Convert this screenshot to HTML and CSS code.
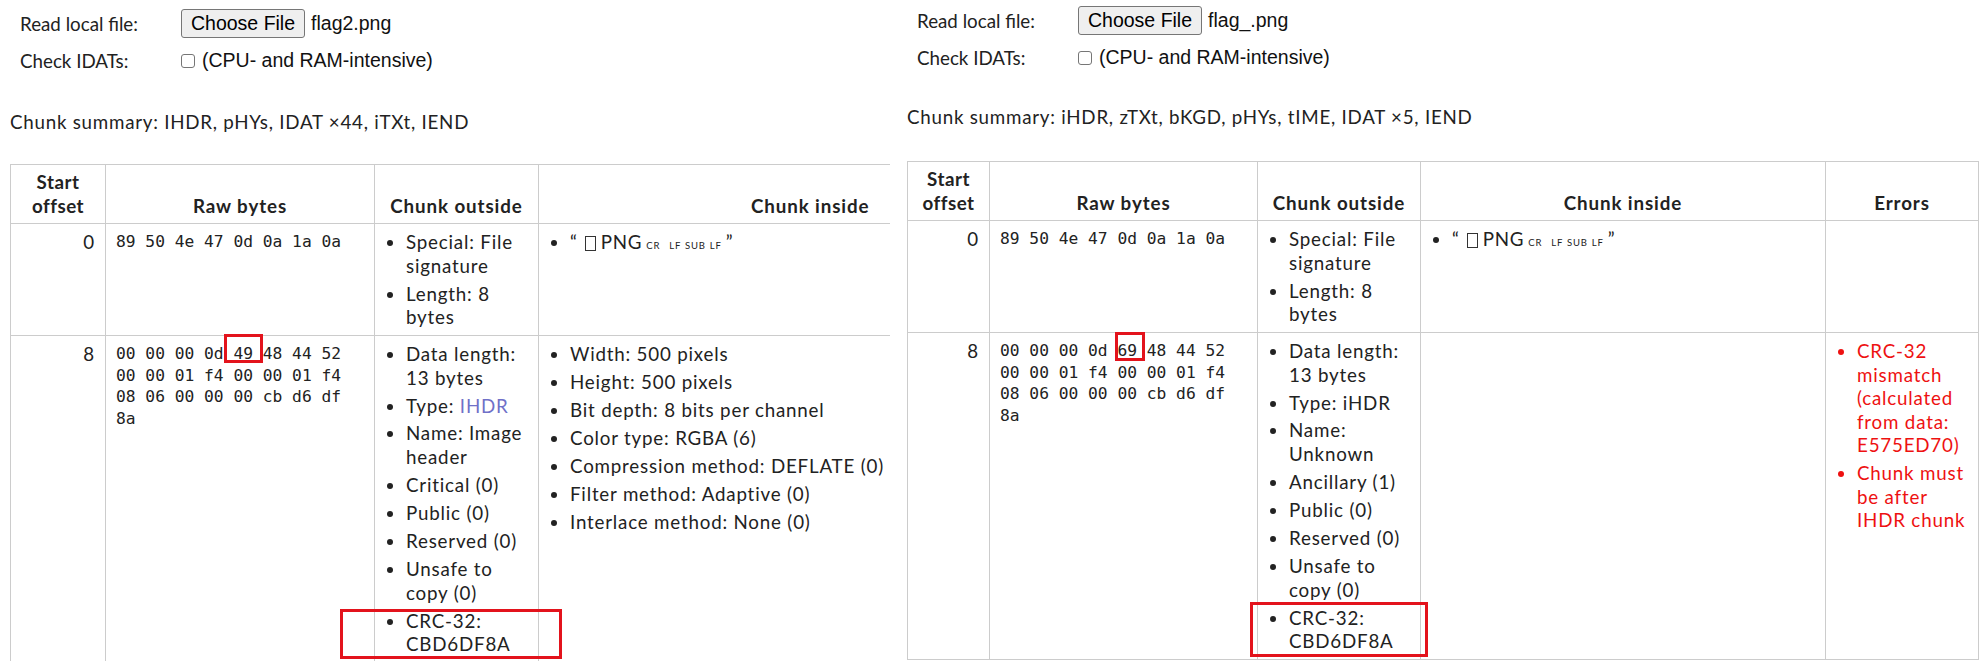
FILE: index.html
```html
<!DOCTYPE html>
<html lang="en">
<head>
<meta charset="utf-8">
<title>PNG file chunk inspector</title>
<link rel="stylesheet" href="styles.css">
</head>
<body>
<div class="shots">
  <section class="panel panel-left">
    <div class="form">
      <div class="form-label">Read local file:</div>
      <div class="form-ctl"><button class="file-btn" type="button">Choose File</button><span class="file-name">flag2.png</span></div>
      <div class="form-label">Check IDATs:</div>
      <div class="form-ctl"><span class="checkbox"></span><span class="ctl-text">(CPU- and RAM-intensive)</span></div>
    </div>
    <p class="summary">Chunk summary: IHDR, pHYs, IDAT ×44, iTXt, IEND</p>
    <table class="chunks chunks-left">
      <colgroup>
        <col class="c-off-l"><col class="c-raw-l"><col class="c-out-l"><col class="c-in-l">
      </colgroup>
      <thead>
        <tr><th class="th-off">Start offset</th><th>Raw bytes</th><th>Chunk outside</th><th class="th-cut">Chunk inside</th></tr>
      </thead>
      <tbody>
        <tr>
          <td class="off">0</td>
          <td class="raw"><span class="hex-line">89 50 4e 47 0d 0a 1a 0a</span></td>
          <td><ul class="items"><li>Special: File signature</li><li>Length: 8 bytes</li></ul></td>
          <td class="td-cut"><ul class="items"><li><span class="q1">“</span><span class="tofu"></span><span class="png">PNG</span><span class="ctrl ctrl-cr">CR</span><span class="ctrl">LF</span><span class="ctrl">SUB</span><span class="ctrl">LF</span><span class="q2">”</span></li></ul></td>
        </tr>
        <tr>
          <td class="off">8</td>
          <td class="raw"><span class="hex-line">00 00 00 0d 49 48 44 52</span><span class="hex-line">00 00 01 f4 00 00 01 f4</span><span class="hex-line">08 06 00 00 00 cb d6 df</span><span class="hex-line">8a</span></td>
          <td><ul class="items"><li>Data length: 13 bytes</li><li>Type: <span class="type-link">IHDR</span></li><li>Name: Image header</li><li>Critical (0)</li><li>Public (0)</li><li>Reserved (0)</li><li>Unsafe to copy (0)</li><li>CRC-32: CBD6DF8A</li></ul></td>
          <td class="td-cut"><ul class="items"><li>Width: 500 pixels</li><li>Height: 500 pixels</li><li>Bit depth: 8 bits per channel</li><li>Color type: RGBA (6)</li><li>Compression method: DEFLATE (0)</li><li>Filter method: Adaptive (0)</li><li>Interlace method: None (0)</li></ul></td>
        </tr>
      </tbody>
    </table>
    <div class="mark mark-l1"></div>
    <div class="mark mark-l2"></div>
  </section>

  <section class="panel panel-right">
    <div class="form">
      <div class="form-label">Read local file:</div>
      <div class="form-ctl"><button class="file-btn" type="button">Choose File</button><span class="file-name">flag_.png</span></div>
      <div class="form-label">Check IDATs:</div>
      <div class="form-ctl"><span class="checkbox"></span><span class="ctl-text">(CPU- and RAM-intensive)</span></div>
    </div>
    <p class="summary summary-right">Chunk summary: iHDR, zTXt, bKGD, pHYs, tIME, IDAT ×5, IEND</p>
    <table class="chunks chunks-right">
      <colgroup>
        <col class="c-off-r"><col class="c-raw-r"><col class="c-out-r"><col class="c-in-r"><col class="c-err-r">
      </colgroup>
      <thead>
        <tr><th class="th-off">Start offset</th><th>Raw bytes</th><th>Chunk outside</th><th>Chunk inside</th><th>Errors</th></tr>
      </thead>
      <tbody>
        <tr>
          <td class="off">0</td>
          <td class="raw"><span class="hex-line">89 50 4e 47 0d 0a 1a 0a</span></td>
          <td><ul class="items"><li>Special: File signature</li><li>Length: 8 bytes</li></ul></td>
          <td><ul class="items"><li><span class="q1">“</span><span class="tofu"></span><span class="png">PNG</span><span class="ctrl ctrl-cr">CR</span><span class="ctrl">LF</span><span class="ctrl">SUB</span><span class="ctrl">LF</span><span class="q2">”</span></li></ul></td>
          <td></td>
        </tr>
        <tr>
          <td class="off">8</td>
          <td class="raw"><span class="hex-line">00 00 00 0d 69 48 44 52</span><span class="hex-line">00 00 01 f4 00 00 01 f4</span><span class="hex-line">08 06 00 00 00 cb d6 df</span><span class="hex-line">8a</span></td>
          <td><ul class="items"><li>Data length: 13 bytes</li><li>Type: iHDR</li><li>Name: Unknown</li><li>Ancillary (1)</li><li>Public (0)</li><li>Reserved (0)</li><li>Unsafe to copy (0)</li><li>CRC-32: CBD6DF8A</li></ul></td>
          <td></td>
          <td><ul class="items errors"><li>CRC-32 mismatch (calculated from data: E575ED70)</li><li>Chunk must be after IHDR chunk</li></ul></td>
        </tr>
      </tbody>
    </table>
    <div class="mark mark-r1"></div>
    <div class="mark mark-r2"></div>
  </section>
</div>
</body>
</html>
```

FILE: styles.css
```css
html, body {
  margin: 0;
  padding: 0;
  background: #ffffff;
}

body {
  width: 1979px;
  height: 661px;
  overflow: hidden;
  font-family: Lato, "Open Sans", sans-serif;
  font-size: 18.75px;
  line-height: 23.6px;
  color: #222222;
}

.shots {
  display: flex;
  gap: 7px;
  align-items: flex-start;
}

.panel {
  position: relative;
  flex: none;
  box-sizing: border-box;
  height: 661px;
  overflow: hidden;
  padding: 7px 0 0 10px;
}

.panel-left { width: 890px; }
.panel-right { width: 1082px; padding-top: 4px; }

/* top form */
.form {
  display: grid;
  grid-template-columns: 161px auto;
  grid-auto-rows: 33px;
  row-gap: 4px;
  align-items: center;
  margin-left: 10px;
}

.form-ctl {
  display: flex;
  align-items: center;
}

.file-btn {
  font: 19.5px/1 "Liberation Sans", Arial, sans-serif;
  height: 29px;
  padding: 0 9px;
  margin: 0;
  background: #efefef;
  color: #000000;
  border: 1px solid #767676;
  border-radius: 3px;
}

.file-name,
.ctl-text {
  font: 19.5px/1 "Liberation Sans", Arial, sans-serif;
  color: #111111;
}

.file-name { margin-left: 6px; }

.checkbox {
  display: inline-block;
  box-sizing: border-box;
  width: 14px;
  height: 14px;
  border: 1px solid #767676;
  border-radius: 3px;
  background: #ffffff;
  margin-right: 7px;
}

.summary {
  margin: 33px 0 30.5px 0;
  letter-spacing: 0.75px;
}

.summary-right {
  margin-top: 31px;
  margin-bottom: 32.5px;
}

/* chunk table */
.chunks {
  border-collapse: collapse;
  table-layout: fixed;
  letter-spacing: 0.8px;
}

.chunks-left { width: 880px; }
.chunks-right { width: 1071px; }

.c-off-l { width: 95px; }
.c-raw-l { width: 269px; }
.c-out-l { width: 164px; }
.c-in-l { width: 352px; }

.c-off-r { width: 82px; }
.c-raw-r { width: 268px; }
.c-out-r { width: 163px; }
.c-in-r { width: 405px; }
.c-err-r { width: 153px; }

.chunks th,
.chunks td {
  border: 1px solid #cccccc;
  padding: 6.1px 10px;
  vertical-align: top;
  text-align: left;
}

.chunks th {
  padding-top: 5.3px;
  padding-bottom: 5.3px;
  vertical-align: bottom;
  text-align: center;
  font-weight: 700;
  letter-spacing: 0.9px;
}

.chunks th.th-off {
  padding-left: 6px;
  padding-right: 6px;
  letter-spacing: 0.5px;
}

/* the left screenshot is cut off inside the "Chunk inside" column */
.chunks th.th-cut {
  text-align: right;
  padding-right: 21px;
  border-right: 0;
}

.chunks td.td-cut {
  padding-right: 0;
  border-right: 0;
}

.chunks td.off { text-align: right; }

.raw {
  font-family: "DejaVu Sans Mono", "Liberation Mono", monospace;
  font-size: 16.25px;
  line-height: 21.6px;
  letter-spacing: 0;
}

.chunks td.raw { padding-top: 7.3px; }

.hex-line { display: block; white-space: pre; }

.items {
  margin: 0;
  padding-left: 21px;
}

.items li + li { margin-top: 4.4px; }

.type-link { color: #7070c8; }

.errors { color: #ee1111; }

/* signature rendering */
.q1 { margin-right: 7px; }
.q2 { margin-left: 4px; }

.tofu {
  display: inline-block;
  box-sizing: border-box;
  width: 11px;
  height: 15px;
  border: 1px solid #333333;
  vertical-align: -2px;
  margin-right: 5px;
}

.ctrl {
  font-size: 9.5px;
  letter-spacing: 0.8px;
  margin-left: 4px;
}

.ctrl-cr { margin-right: 5px; }

/* red annotation boxes drawn over the screenshot */
.mark {
  position: absolute;
  box-sizing: border-box;
  border: 3px solid #e3131c;
}

.mark-l1 { left: 224px; top: 334px; width: 39px; height: 29px; }
.mark-l2 { left: 340px; top: 609px; width: 222px; height: 50px; }
.mark-r1 { left: 218px; top: 332px; width: 30px; height: 29px; }
.mark-r2 { left: 353px; top: 602px; width: 178px; height: 55px; }
```
